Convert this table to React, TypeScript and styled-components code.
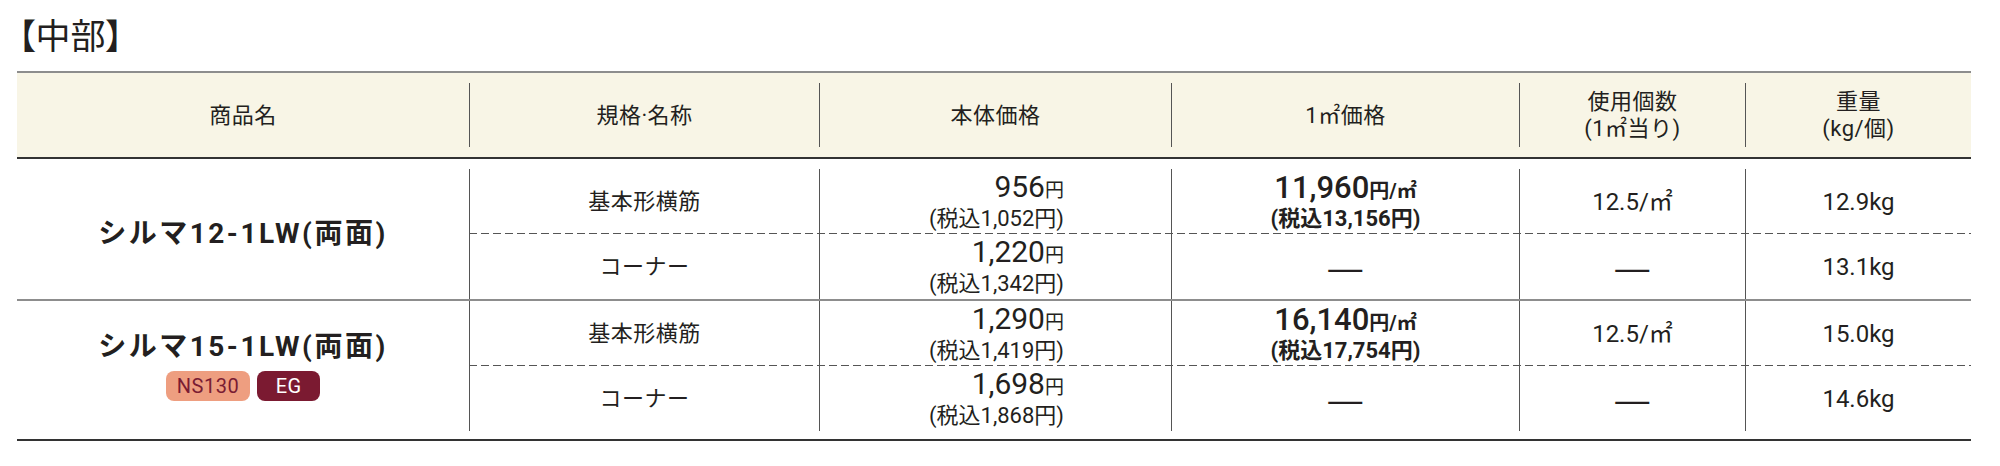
import React from "react";
import styled, { createGlobalStyle } from "styled-components";

const GlobalStyle = createGlobalStyle`
  body {
    margin: 0;
    background: #fff;
    color: #231f20;
    font-family: Roboto, "Noto Sans CJK JP", sans-serif;
  }
`;

const COLS = "452px 350px 352px 348px 226px 226px";
const SUB_COLS = "350px 352px 348px 226px 226px";

const Page = styled.div`
  width: 1954px;
  padding: 16px 0 0 17px;
`;

const Title = styled.h2`
  margin: 0 0 19px 1px;
  font-family: "Noto Sans CJK JP", sans-serif;
  font-size: 35px;
  line-height: 36px;
  font-weight: 400;
  font-feature-settings: "palt";
`;

const Table = styled.div`
  width: 1954px;
`;

const HeadRow = styled.div`
  display: grid;
  grid-template-columns: ${COLS};
  background: #f8f5e6;
  border-top: 2px solid #8d8d8d;
  border-bottom: 2px solid #333;
  padding: 10px 0;
`;

const HeadCell = styled.div<{ first?: boolean }>`
  height: 64px;
  display: flex;
  flex-direction: column;
  align-items: center;
  justify-content: center;
  border-left: ${({ first }) => (first ? "none" : "1.5px solid #555")};
  font-size: 22px;
  line-height: 27px;
  letter-spacing: 0.5px;
`;

const Body = styled.div`
  border-bottom: 2px solid #333;
  padding: 10px 0 8px;
`;

const Group = styled.div<{ divided?: boolean }>`
  display: grid;
  grid-template-columns: 452px 1502px;
  border-top: ${({ divided }) => (divided ? "2px solid #8d8d8d" : "none")};
`;

const NameCell = styled.div`
  display: flex;
  flex-direction: column;
  align-items: center;
  justify-content: center;
`;

const Name = styled.div`
  font-size: 28px;
  line-height: 32px;
  font-weight: 700;
  letter-spacing: 2.5px;
`;

const Badges = styled.div`
  display: flex;
  gap: 7px;
  margin-top: 8px;
`;

const Badge = styled.span<{ tone: "salmon" | "wine" }>`
  min-width: 63px;
  height: 30px;
  padding: 0 11px;
  box-sizing: border-box;
  border-radius: 8px;
  display: inline-flex;
  align-items: center;
  justify-content: center;
  font-size: 20px;
  letter-spacing: 0.5px;
  background: ${({ tone }) => (tone === "salmon" ? "#ee9e80" : "#7b1a31")};
  color: ${({ tone }) => (tone === "salmon" ? "#7a1c33" : "#fff")};
`;

const SubRows = styled.div`
  display: flex;
  flex-direction: column;
`;

const SubRow = styled.div<{ dashed?: boolean }>`
  display: grid;
  grid-template-columns: ${SUB_COLS};
  height: 65px;
  background-image: ${({ dashed }) =>
    dashed
      ? "linear-gradient(to right, #555 0 8px, transparent 8px 12px)"
      : "none"};
  background-size: 12px 1px;
  background-repeat: repeat-x;
  background-position: left bottom;
`;

const Cell = styled.div<{ align?: "center" | "right" }>`
  border-left: 1.5px solid #555;
  display: flex;
  flex-direction: column;
  justify-content: center;
  align-items: ${({ align }) => (align === "right" ? "flex-end" : "center")};
  padding-right: ${({ align }) => (align === "right" ? "107px" : "0")};
  font-size: 22px;
  line-height: 26px;
  letter-spacing: 0.5px;
`;

const Value = styled.span`
  font-size: 24px;
  line-height: 28px;
  letter-spacing: 0;
`;

const PriceMain = styled.span`
  font-size: 30px;
  line-height: 30px;
  font-weight: 400;
  letter-spacing: 0;
`;

const PriceSub = styled.span`
  font-size: 22px;
  line-height: 25px;
  letter-spacing: 0;
`;

const Yen = styled.span`
  font-size: 19px;
  font-weight: 400;
`;

const UnitMain = styled.span`
  font-size: 31px;
  line-height: 30px;
  font-weight: 500;
  letter-spacing: 0;
`;

const UnitSuffix = styled.span`
  font-size: 20px;
  font-weight: 700;
`;

const UnitSub = styled.span`
  font-size: 22px;
  line-height: 25px;
  font-weight: 700;
  letter-spacing: 0;
`;

const Dash = styled.span`
  font-family: "Liberation Sans", sans-serif;
  font-size: 34px;
  line-height: 34px;
  font-weight: 400;
`;

type Line = {
  spec: string;
  price: string;
  tax: string;
  unit?: string;
  unitTax?: string;
  count?: string;
  weight: string;
};

type Product = {
  name: string;
  badges?: boolean;
  lines: Line[];
};

const products: Product[] = [
  {
    name: "シルマ12-1LW(両面)",
    lines: [
      {
        spec: "基本形横筋",
        price: "956",
        tax: "(税込1,052円)",
        unit: "11,960",
        unitTax: "(税込13,156円)",
        count: "12.5/㎡",
        weight: "12.9kg",
      },
      { spec: "コーナー", price: "1,220", tax: "(税込1,342円)", weight: "13.1kg" },
    ],
  },
  {
    name: "シルマ15-1LW(両面)",
    badges: true,
    lines: [
      {
        spec: "基本形横筋",
        price: "1,290",
        tax: "(税込1,419円)",
        unit: "16,140",
        unitTax: "(税込17,754円)",
        count: "12.5/㎡",
        weight: "15.0kg",
      },
      { spec: "コーナー", price: "1,698", tax: "(税込1,868円)", weight: "14.6kg" },
    ],
  },
];

const App: React.FC = () => {
  return (
    <Page>
      <GlobalStyle />
      <Title>【中部】</Title>
      <Table>
        <HeadRow>
          <HeadCell first>商品名</HeadCell>
          <HeadCell>規格·名称</HeadCell>
          <HeadCell>本体価格</HeadCell>
          <HeadCell>1㎡価格</HeadCell>
          <HeadCell>
            <span>使用個数</span>
            <span>(1㎡当り)</span>
          </HeadCell>
          <HeadCell>
            <span>重量</span>
            <span>(kg/個)</span>
          </HeadCell>
        </HeadRow>
        <Body>
          {products.map((p, gi) => (
            <Group key={p.name} divided={gi > 0}>
              <NameCell>
                <Name>{p.name}</Name>
                {p.badges && (
                  <Badges>
                    <Badge tone="salmon">NS130</Badge>
                    <Badge tone="wine">EG</Badge>
                  </Badges>
                )}
              </NameCell>
              <SubRows>
                {p.lines.map((l, i) => (
                  <SubRow key={l.spec} dashed={i === 0}>
                    <Cell>{l.spec}</Cell>
                    <Cell align="right">
                      <PriceMain>
                        {l.price}
                        <Yen>円</Yen>
                      </PriceMain>
                      <PriceSub>{l.tax}</PriceSub>
                    </Cell>
                    <Cell>
                      {l.unit ? (
                        <>
                          <UnitMain>
                            {l.unit}
                            <UnitSuffix>円/㎡</UnitSuffix>
                          </UnitMain>
                          <UnitSub>{l.unitTax}</UnitSub>
                        </>
                      ) : (
                        <Dash>—</Dash>
                      )}
                    </Cell>
                    <Cell>{l.count ? <Value>{l.count}</Value> : <Dash>—</Dash>}</Cell>
                    <Cell>
                      <Value>{l.weight}</Value>
                    </Cell>
                  </SubRow>
                ))}
              </SubRows>
            </Group>
          ))}
        </Body>
      </Table>
    </Page>
  );
};

export default App;
